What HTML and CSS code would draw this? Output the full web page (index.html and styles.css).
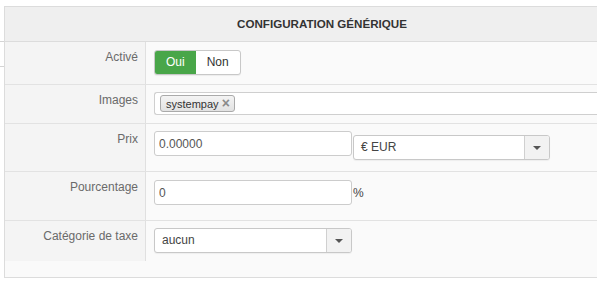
FILE: index.html
```html
<!DOCTYPE html>
<html lang="fr">
<head>
    <meta charset="UTF-8">
    <title>Configuration générique</title>
    <link rel="stylesheet" href="styles.css">
</head>
<body>

<div class="page">
    <div class="gutter"><div class="gutter-lines"></div></div>

    <div class="panel">
        <div class="panel-head">CONFIGURATION GÉNÉRIQUE</div>

        <div class="form-row row-active">
            <div class="form-label">Activé</div>
            <div class="form-field field-active">
                <div class="toggle">
                    <span class="toggle-btn is-on">Oui</span>
                    <span class="toggle-btn">Non</span>
                </div>
            </div>
        </div>

        <div class="form-row row-images">
            <div class="form-label">Images</div>
            <div class="form-field field-images">
                <div class="tag-input">
                    <span class="tag">systempay <span class="tag-close">×</span></span>
                </div>
            </div>
        </div>

        <div class="form-row row-price">
            <div class="form-label">Prix</div>
            <div class="form-field field-price">
                <input class="text-input" type="text" value="0.00000">
                <div class="select select-currency">
                    <span class="select-value">€ EUR</span>
                    <span class="select-caret"><i></i></span>
                </div>
            </div>
        </div>

        <div class="form-row row-percent">
            <div class="form-label">Pourcentage</div>
            <div class="form-field field-percent">
                <input class="text-input" type="text" value="0"><span class="unit">%</span>
            </div>
        </div>

        <div class="form-row row-tax form-row-last">
            <div class="form-label">Catégorie de taxe</div>
            <div class="form-field">
                <div class="select">
                    <span class="select-value">aucun</span>
                    <span class="select-caret"><i></i></span>
                </div>
            </div>
        </div>

        <div class="panel-foot"></div>
    </div>
</div>

</body>
</html>
```

FILE: styles.css
```css
* {
    margin: 0;
    padding: 0;
    box-sizing: border-box;
}

body {
    overflow: hidden;
    background: #fff;
    font-family: "Liberation Sans", Arial, sans-serif;
    font-size: 12px;
    color: #555;
}

.page {
    display: flex;
    align-items: flex-start;
}

/* bits of the page behind the panel */
.gutter {
    flex: none;
    width: 4px;
}

.gutter-lines {
    margin-top: 41px;
    height: 26px;
    border-top: 1px solid #d4d4d4;
    border-bottom: 1px solid #d4d4d4;
}

/* the panel is cut by the right edge of the window */
.panel {
    flex: 1;
    min-width: 0;
    margin-top: 6px;
    border: 1px solid #dcdcdc;
    border-right: none;
    background: #fafafa;
}

.panel-head {
    height: 35px;
    padding-left: 42px;
    line-height: 34px;
    background: #efefef;
    border-bottom: 1px solid #dcdcdc;
    text-align: center;
    font-size: 11.6px;
    font-weight: bold;
    color: #333;
}

.form-row {
    display: grid;
    grid-template-columns: 141px 1fr;
    border-bottom: 1px solid #e2e2e2;
}

.form-row-last {
    border-bottom: none;
}

.row-active { height: 43px; }
.row-images { height: 39px; }
.row-price { height: 48px; }
.row-percent { height: 49px; }
.row-tax { height: 40px; }

.form-label {
    background: #f4f4f4;
    border-right: 1px solid #e0e0e0;
    padding: 7px 7px 0 0;
    text-align: right;
    line-height: 17px;
    color: #6a6a6a;
}

.form-field {
    min-width: 0;
    padding: 7px 8px 0;
}

.field-active,
.field-percent {
    padding-top: 8px;
}

.field-images {
    padding-right: 0;
}

/* Oui / Non */
.toggle {
    display: inline-flex;
    height: 25px;
    border: 1px solid #c8c8c8;
    border-radius: 3px;
    background: #fff;
    box-shadow: 0 1px 1px rgba(0, 0, 0, 0.06);
    overflow: hidden;
}

.toggle-btn {
    padding: 0 11px;
    line-height: 23px;
    color: #333;
}

.toggle-btn.is-on {
    background: #49a649;
    color: #fff;
}

/* images */
.tag-input {
    height: 23px;
    padding: 2px 5px;
    border: 1px solid #cfcfcf;
    border-right: none;
    border-radius: 3px 0 0 3px;
    background: #fff;
}

.tag {
    display: inline-block;
    height: 17px;
    padding: 0 4px 0 5px;
    border: 1px solid #aaa;
    border-radius: 3px;
    background: linear-gradient(#f4f4f4, #e2e2e2);
    font-size: 11px;
    line-height: 15px;
    color: #333;
}

.tag-close {
    font-size: 14px;
    font-weight: bold;
    line-height: 14px;
    color: #8a8a8a;
}

.text-input {
    width: 198px;
    height: 25px;
    padding: 0 4px;
    border: 1px solid #cccccc;
    border-radius: 3px;
    background: #fff;
    font: 12px "Liberation Sans", Arial, sans-serif;
    color: #555;
    outline: none;
    vertical-align: baseline;
}

.field-price {
    display: flex;
    align-items: flex-start;
}

.unit {
    margin-left: 1px;
    color: #444;
}

/* select2 style boxes */
.select {
    display: flex;
    width: 198px;
    height: 25px;
    border: 1px solid #c8c8c8;
    border-radius: 3px;
    background: #fff;
    box-shadow: 0 1px 1px rgba(0, 0, 0, 0.05);
    overflow: hidden;
}

.select-currency {
    width: 197px;
    margin: 4px 0 0 1px;
}

.select-value {
    flex: 1;
    padding-left: 7px;
    line-height: 23px;
    color: #444;
}

.select-caret {
    display: flex;
    align-items: center;
    justify-content: center;
    width: 25px;
    border-left: 1px solid #d0d0d0;
    background: #f2f2f2;
}

.select-caret i {
    width: 0;
    height: 0;
    border-left: 4px solid transparent;
    border-right: 4px solid transparent;
    border-top: 4px solid #555;
}

.panel-foot {
    height: 16px;
    background: #fafafa;
}
```
